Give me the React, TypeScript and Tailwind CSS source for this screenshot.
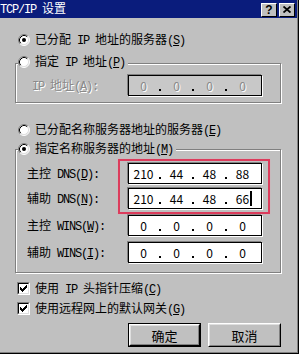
import React from "react";

const L = ({ children }: { children: React.ReactNode }) => (
  <span className="font-['Liberation_Mono',monospace] tracking-[-1.2px]">{children}</span>
);

const Radio = ({ checked }: { checked?: boolean }) => (
  <svg width="12" height="12" viewBox="0 0 12 12" className="shrink-0">
    <circle cx="6" cy="6" r="5" fill="#fff" />
    <path d="M2.11 9.89 A5.5 5.5 0 0 1 9.89 2.11" fill="none" stroke="#808080" strokeWidth="1" />
    <path d="M2.82 9.18 A4.5 4.5 0 0 1 9.18 2.82" fill="none" stroke="#000" strokeWidth="1" />
    <path d="M9.89 2.11 A5.5 5.5 0 0 1 2.11 9.89" fill="none" stroke="#fff" strokeWidth="1" />
    <path d="M9.18 2.82 A4.5 4.5 0 0 1 2.82 9.18" fill="none" stroke="#dfdfdf" strokeWidth="1" />
    {checked && <circle cx="6" cy="6" r="2" fill="#000" />}
  </svg>
);

const checkPixels: [number, number][] = [
  [6, 0],
  [5, 1], [6, 1],
  [0, 2], [4, 2], [5, 2], [6, 2],
  [0, 3], [1, 3], [3, 3], [4, 3], [5, 3],
  [0, 4], [1, 4], [2, 4], [3, 4], [4, 4],
  [1, 5], [2, 5], [3, 5],
  [2, 6],
];

const Checkbox = () => (
  <div className="w-[13px] h-[13px] shrink-0 border border-t-[#808080] border-l-[#808080] border-b-white border-r-white">
    <div className="w-full h-full bg-white border border-t-black border-l-black border-b-[#dfdfdf] border-r-[#dfdfdf] flex items-center justify-center">
      <svg width="7" height="7" viewBox="0 0 7 7" shapeRendering="crispEdges">
        {checkPixels.map(([x, y], i) => (
          <rect key={i} x={x} y={y} width="1" height="1" fill="#000" />
        ))}
      </svg>
    </div>
  </div>
);

const Dot = () => (
  <div className="w-[4px] h-full flex items-end justify-center pb-[4px]">
    <div className="w-[2px] h-[2px] bg-black" />
  </div>
);

const IpField = ({ values, disabled, cursor }: { values: string[]; disabled?: boolean; cursor?: boolean }) => (
  <div
    className={`w-[134px] h-[21px] border border-black shadow-[-1px_-1px_0_#808080,1px_1px_0_#ffffff] flex ${
      disabled ? "bg-[#c8c8c8]" : "bg-white"
    }`}
  >
    {values.map((v, i) => (
      <React.Fragment key={i}>
        {i > 0 && <Dot />}
        <div className="w-[29px] h-full flex items-center justify-center">
          <span
            className={`relative leading-[12px] ${
              disabled ? "text-[#8a8a8a] [text-shadow:1px_1px_0_#fff]" : "text-black"
            }`}
          >
            {v}
            {cursor && i === values.length - 1 && (
              <span className="absolute left-full top-[-2px] ml-[1px] w-[2px] h-[15px] bg-black" />
            )}
          </span>
        </div>
      </React.Fragment>
    ))}
  </div>
);

const Row = ({ label, children, className = "", labelPad = "pl-[11px]" }: { label: React.ReactNode; children: React.ReactNode; className?: string; labelPad?: string }) => (
  <div className={`flex items-center ${className}`}>
    <div className={`w-[112px] ${labelPad} leading-[12px] whitespace-nowrap`}>{label}</div>
    {children}
  </div>
);

const RaisedBtn = ({ children, isDefault }: { children: React.ReactNode; isDefault?: boolean }) => (
  <div className={`w-[73px] h-[24px] ${isDefault ? "border border-black" : ""}`}>
    <div className="w-full h-full border border-t-white border-l-white border-b-black border-r-black">
      <div className="w-full h-full border border-t-[#dfdfdf] border-l-[#dfdfdf] border-b-[#808080] border-r-[#808080] flex items-center justify-center text-[13px] leading-[13px]">
        {children}
      </div>
    </div>
  </div>
);

const TitleBtn = ({ children }: { children: React.ReactNode }) => (
  <div className="w-[16px] h-[14px] bg-[#c0c0c0] border border-t-white border-l-white border-b-black border-r-black flex items-center justify-center text-black font-bold text-[12px] leading-[12px] font-['Liberation_Sans',sans-serif]">
    {children}
  </div>
);

export default function App() {
  return (
    <div className="w-[301px] h-[355px] bg-white font-['Noto_Sans_CJK_SC',sans-serif] text-[12px] leading-[12px] text-black">
      <div className="w-[299px] h-[354px] bg-[#c0c0c0] border-r border-b border-black shadow-[inset_-1px_-1px_0_#808080] flex flex-col">
        {/* Title bar */}
        <div className="h-[18px] w-[297px] bg-[#0a1c7c] flex items-center justify-between pr-[2px]">
          <span className="text-white text-[12px] leading-[12px] whitespace-nowrap">
            <L>TCP/IP </L>设置
          </span>
          <div className="flex gap-[2px] mt-[1px]">
            <TitleBtn>?</TitleBtn>
            <TitleBtn>
              <svg width="8" height="7" viewBox="0 0 8 7">
                <path d="M0.5 0.5 L7.5 6.5 M7.5 0.5 L0.5 6.5" stroke="#000" strokeWidth="1.8" />
              </svg>
            </TitleBtn>
          </div>
        </div>

        {/* Radio 1 */}
        <div className="mt-[16px] ml-[18px] h-[12px] flex items-center gap-[5px] whitespace-nowrap">
          <Radio checked />
          <span>
            已分配<L> IP </L>地址的服务器<L>(<u>S</u>)</L>
          </span>
        </div>

        {/* Group 1 */}
        <div className="mt-[17px] ml-[15px] w-[266px] border border-[#808080] shadow-[inset_1px_1px_0_#fff,1px_1px_0_#fff] pb-[6px]">
          <div className="-mt-[8px] ml-[2px] w-fit h-[12px] bg-[#c0c0c0] pr-[3px] flex items-center gap-[5px] whitespace-nowrap">
            <Radio />
            <span>
              指定<L> IP </L>地址<L>(<u>P</u>)</L>
            </span>
          </div>
          <Row
            className="mt-[7px]"
            labelPad="pl-[16px]"
            label={
              <span className="text-[#8a8a8a] [text-shadow:1px_1px_0_#fff]">
                <L>IP </L>地址<L>(<u>A</u>):</L>
              </span>
            }
          >
            <IpField values={["0", "0", "0", "0"]} disabled />
          </Row>
        </div>

        {/* Radio 3 */}
        <div className="mt-[21px] ml-[18px] h-[12px] flex items-center gap-[5px] whitespace-nowrap">
          <Radio />
          <span>
            已分配名称服务器地址的服务器<L>(<u>E</u>)</L>
          </span>
        </div>

        {/* Group 2 */}
        <div className="relative mt-[13px] ml-[15px] w-[266px] border border-[#808080] shadow-[inset_1px_1px_0_#fff,1px_1px_0_#fff] pb-[9px]">
          <div className="-mt-[7px] ml-[2px] w-fit h-[12px] bg-[#c0c0c0] pr-[3px] flex items-center gap-[5px] whitespace-nowrap">
            <Radio checked />
            <span>
              指定名称服务器的地址<L>(<u>M</u>)</L>
            </span>
          </div>
          <Row className="mt-[8px]" label={<>主控<L> DNS(<u>D</u>):</L></>}>
            <IpField values={["210", "44", "48", "88"]} />
          </Row>
          <Row className="mt-[4px]" label={<>辅助<L> DNS(<u>N</u>):</L></>}>
            <IpField values={["210", "44", "48", "66"]} cursor />
          </Row>
          <Row className="mt-[6px]" label={<>主控<L> WINS(<u>W</u>):</L></>}>
            <IpField values={["0", "0", "0", "0"]} />
          </Row>
          <Row className="mt-[6px]" label={<>辅助<L> WINS(<u>I</u>):</L></>}>
            <IpField values={["0", "0", "0", "0"]} />
          </Row>
          <div className="absolute left-[102px] top-[9px] w-[152px] h-[55px] border-2 border-[#dc3c5c] shadow-[0_0_1px_#f0a0b0]" />
        </div>

        {/* Checkboxes */}
        <div className="mt-[9px] ml-[17px] h-[13px] flex items-center gap-[5px] whitespace-nowrap">
          <Checkbox />
          <span>
            使用<L> IP </L>头指针压缩<L>(<u>C</u>)</L>
          </span>
        </div>
        <div className="mt-[7px] ml-[17px] h-[13px] flex items-center gap-[5px] whitespace-nowrap">
          <Checkbox />
          <span>
            使用远程网上的默认网关<L>(<u>G</u>)</L>
          </span>
        </div>

        {/* Buttons */}
        <div className="mt-[8px] ml-[128px] flex gap-[7px]">
          <RaisedBtn isDefault>确定</RaisedBtn>
          <RaisedBtn>取消</RaisedBtn>
        </div>
      </div>
    </div>
  );
}
